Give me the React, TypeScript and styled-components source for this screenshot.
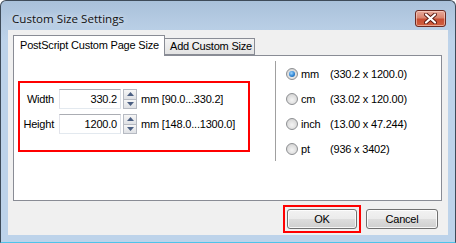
import React from "react";
import styled, { createGlobalStyle } from "styled-components";

const Global = createGlobalStyle`
  html, body { margin: 0; padding: 0; background: #ffffff; }
  body { font-family: "Liberation Sans", Arial, sans-serif; font-size: 11px; letter-spacing: -0.2px; color: #000; }
  * { box-sizing: border-box; }
`;

const Window = styled.div`
  width: 456px;
  height: 243px;
  border: 1px solid #3e4b59;
  border-bottom: 1px solid #4fc3ea;
  border-radius: 6px 6px 0 0;
  background: linear-gradient(to bottom, #a9c1da 0px, #b7cde4 24px, #bdd3ea 40px, #bdd3ea 100%);
  display: flex;
  flex-direction: column;
  overflow: hidden;
`;

const TitleBar = styled.div`
  height: 29px;
  flex: none;
  display: flex;
  justify-content: space-between;
  align-items: flex-start;
  padding: 0 9px 0 11px;
`;

const Title = styled.div`
  font-family: "Open Sans", "Noto Sans", sans-serif;
  font-size: 11.6px;
  letter-spacing: 0;
  color: #111;
  padding-top: 10px;
  line-height: 16px;
  text-shadow: 0 0 6px rgba(255, 255, 255, 0.9);
`;

const CloseButton = styled.div`
  margin-top: 9px;
  width: 31px;
  height: 17px;
  border: 1px solid #6b2a22;
  border-radius: 3px;
  background: linear-gradient(to bottom, #e8aa9b 0%, #d9856f 45%, #c74d33 55%, #d0603f 100%);
  box-shadow: inset 0 0 0 1px rgba(255, 220, 210, 0.55);
  display: flex;
  align-items: center;
  justify-content: center;
`;

const Client = styled.div`
  margin: 0 7px;
  height: 205px;
  flex: none;
  background: #f0f0f0;
  padding: 5px 6px 0 5px;
  display: flex;
  flex-direction: column;
`;

const TabStrip = styled.div`
  display: flex;
  align-items: flex-end;
  height: 20px;
  position: relative;
  z-index: 1;
`;

const Tab = styled.div<{ $active?: boolean }>`
  border: 1px solid #898c95;
  border-bottom: ${(p) => (p.$active ? "none" : "1px solid #898c95")};
  background: ${(p) => (p.$active ? "#ffffff" : "linear-gradient(to bottom, #f3f3f3, #e3e3e3)")};
  height: ${(p) => (p.$active ? "21px" : "17px")};
  margin-bottom: ${(p) => (p.$active ? "-1px" : "0")};
  margin-left: ${(p) => (p.$active ? "0" : "-1px")};
  width: ${(p) => (p.$active ? "152px" : "91px")};
  padding-left: ${(p) => (p.$active ? "6px" : "5px")};
  line-height: ${(p) => (p.$active ? "18px" : "15px")};
  white-space: nowrap;
`;

const Panel = styled.div`
  border: 1px solid #898c95;
  background: #ffffff;
  height: 146px;
  display: flex;
  align-items: flex-start;
`;

const SizeBox = styled.div`
  margin: 25px 0 0 4px;
  width: 232px;
  height: 71px;
  border: 2px solid #ff0000;
  padding-top: 6px;
  display: flex;
  flex-direction: column;
  gap: 5px;
`;

const Row = styled.div`
  display: flex;
  align-items: center;
  height: 20px;
`;

const FieldLabel = styled.div`
  width: 34px;
  margin-right: 5px;
  text-align: right;
`;

const NumInput = styled.div`
  width: 62px;
  height: 20px;
  border: 1px solid;
  border-color: #abadb3 #dbdfe6 #e3e9ef #e2e3ea;
  text-align: right;
  padding-right: 3px;
  line-height: 18px;
  background: #fff;
`;

const Spin = styled.div`
  margin-left: 2px;
  width: 14px;
  height: 20px;
  display: flex;
  flex-direction: column;
`;

const SpinHalf = styled.div`
  flex: 1;
  border: 1px solid #b6bac2;
  background: linear-gradient(to bottom, #f6f6f6, #dfe1e5);
  display: flex;
  align-items: center;
  justify-content: center;
  & + & { border-top: none; }
`;

const Unit = styled.div`
  margin-left: 4px;
  white-space: nowrap;
`;

const RadioGroup = styled.div`
  margin: 5px 0 0 25px;
  height: 100px;
  border-left: 1px solid #a0a0a0;
  padding: 1px 0 0 10px;
  display: flex;
  flex-direction: column;
`;

const RadioRow = styled.div`
  height: 25px;
  display: flex;
  align-items: center;
`;

const RadioDot = styled.div<{ $checked?: boolean }>`
  width: 12px;
  height: 12px;
  border-radius: 50%;
  border: 1px solid #8d8f92;
  background: radial-gradient(circle at 50% 60%, #f4f4f4 0%, #dcdcdc 60%, #c9c9c9 100%);
  display: flex;
  align-items: center;
  justify-content: center;
  &::after {
    content: "";
    display: ${(p) => (p.$checked ? "block" : "none")};
    width: 6px;
    height: 6px;
    border-radius: 50%;
    background: radial-gradient(circle at 40% 35%, #9fd6ff 0%, #2f86d6 55%, #14508f 100%);
  }
`;

const RadioUnit = styled.div`
  margin-left: 3px;
  width: 29px;
`;

const RadioValue = styled.div`
  white-space: nowrap;
`;

const ButtonRow = styled.div`
  margin-top: 4px;
  display: flex;
  justify-content: flex-end;
  align-items: center;
  gap: 5px;
  padding-right: 4px;
`;

const Highlight = styled.div`
  border: 2px solid #ff0000;
  padding: 2px;
`;

const Button = styled.div<{ $w: number }>`
  width: ${(p) => p.$w}px;
  height: 20px;
  border: 1px solid #707070;
  border-radius: 3px;
  background: linear-gradient(to bottom, #f2f2f2 0%, #ebebeb 50%, #dddddd 51%, #cfcfcf 100%);
  box-shadow: inset 0 0 0 1px rgba(255, 255, 255, 0.8);
  text-align: center;
  line-height: 18px;
`;

const Arrow = ({ up }: { up?: boolean }) => (
  <svg width="7" height="4" viewBox="0 0 7 4">
    <path d={up ? "M0 4 L3.5 0 L7 4 Z" : "M0 0 L3.5 4 L7 0 Z"} fill="#4b5f82" />
  </svg>
);

const radios = [
  { unit: "mm", value: "(330.2 x 1200.0)", checked: true },
  { unit: "cm", value: "(33.02 x 120.00)" },
  { unit: "inch", value: "(13.00 x 47.244)" },
  { unit: "pt", value: "(936 x 3402)" },
];

export default function App() {
  return (
    <>
      <Global />
      <Window>
        <TitleBar>
          <Title>Custom Size Settings</Title>
          <CloseButton>
            <svg width="13" height="11" viewBox="0 0 13 11">
              <path
                d="M2 1.5 L11 9.5 M11 1.5 L2 9.5"
                stroke="#5a1a12"
                strokeWidth="4"
                strokeLinecap="round"
              />
              <path
                d="M2 1.5 L11 9.5 M11 1.5 L2 9.5"
                stroke="#ffffff"
                strokeWidth="2.2"
                strokeLinecap="round"
              />
            </svg>
          </CloseButton>
        </TitleBar>
        <Client>
          <TabStrip>
            <Tab $active>PostScript Custom Page Size</Tab>
            <Tab>Add Custom Size</Tab>
          </TabStrip>
          <Panel>
            <SizeBox>
              <Row>
                <FieldLabel>Width</FieldLabel>
                <NumInput>330.2</NumInput>
                <Spin>
                  <SpinHalf><Arrow up /></SpinHalf>
                  <SpinHalf><Arrow /></SpinHalf>
                </Spin>
                <Unit>mm [90.0...330.2]</Unit>
              </Row>
              <Row>
                <FieldLabel>Height</FieldLabel>
                <NumInput>1200.0</NumInput>
                <Spin>
                  <SpinHalf><Arrow up /></SpinHalf>
                  <SpinHalf><Arrow /></SpinHalf>
                </Spin>
                <Unit>mm [148.0...1300.0]</Unit>
              </Row>
            </SizeBox>
            <RadioGroup>
              {radios.map((r) => (
                <RadioRow key={r.unit}>
                  <RadioDot $checked={r.checked} />
                  <RadioUnit>{r.unit}</RadioUnit>
                  <RadioValue>{r.value}</RadioValue>
                </RadioRow>
              ))}
            </RadioGroup>
          </Panel>
          <ButtonRow>
            <Highlight>
              <Button $w={70}>OK</Button>
            </Highlight>
            <Button $w={72}>Cancel</Button>
          </ButtonRow>
        </Client>
      </Window>
    </>
  );
}
